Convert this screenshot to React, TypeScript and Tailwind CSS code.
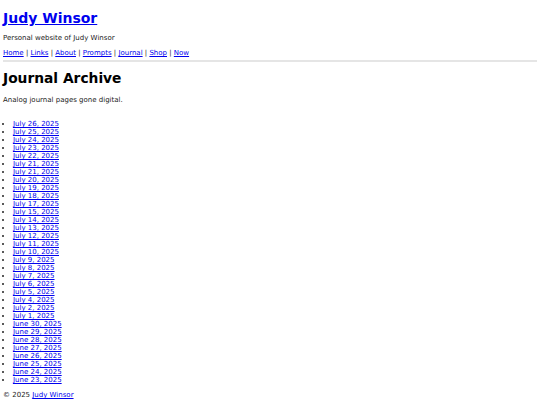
const dates = [
  "July 26, 2025", "July 25, 2025", "July 24, 2025", "July 23, 2025", "July 22, 2025",
  "July 21, 2025", "July 21, 2025", "July 20, 2025", "July 19, 2025", "July 18, 2025",
  "July 17, 2025", "July 15, 2025", "July 14, 2025", "July 13, 2025", "July 12, 2025",
  "July 11, 2025", "July 10, 2025", "July 9, 2025", "July 8, 2025", "July 7, 2025",
  "July 6, 2025", "July 5, 2025", "July 4, 2025", "July 2, 2025", "July 1, 2025",
  "June 30, 2025", "June 29, 2025", "June 28, 2025", "June 27, 2025", "June 26, 2025",
  "June 25, 2025", "June 24, 2025", "June 23, 2025",
];

const nav = ["Home", "Links", "About", "Prompts", "Journal", "Shop", "Now"];

export default function App() {
  return (
    <div className="min-h-[405px] bg-white px-[3px] text-[7px] leading-[8px] text-[#222] [font-family:'DejaVu_Sans',sans-serif]">
      <header>
        <h1 className="pt-[10px] text-[14px] font-bold leading-[16px]">
          <a href="#" className="text-[#0000ee] underline">Judy Winsor</a>
        </h1>
        <p className="mt-[8px]">Personal website of Judy Winsor</p>
        <nav className="mt-[7px]">
          {nav.map((n, i) => (
            <span key={n}>
              {i > 0 && " | "}
              <a href="#" className="text-[#0000ee] underline">{n}</a>
            </span>
          ))}
        </nav>
        <hr className="mt-[3px] border-t-2 border-[#e5e5e5]" />
      </header>

      <main>
        <h2 className="mt-[8px] text-[13.8px] font-bold leading-[16px] text-black">Journal Archive</h2>
        <p className="mt-[10px]">Analog journal pages gone digital.</p>
        <ul className="mt-[16px] list-disc pl-[10px]">
          {dates.map((d, i) => (
            <li key={i}>
              <a href="#" className="text-[#0000ee] underline">{d}</a>
            </li>
          ))}
        </ul>
      </main>

      <footer className="mt-[7px]">
        © 2025 <a href="#" className="text-[#0000ee] underline">Judy Winsor</a>
      </footer>
    </div>
  );
}
